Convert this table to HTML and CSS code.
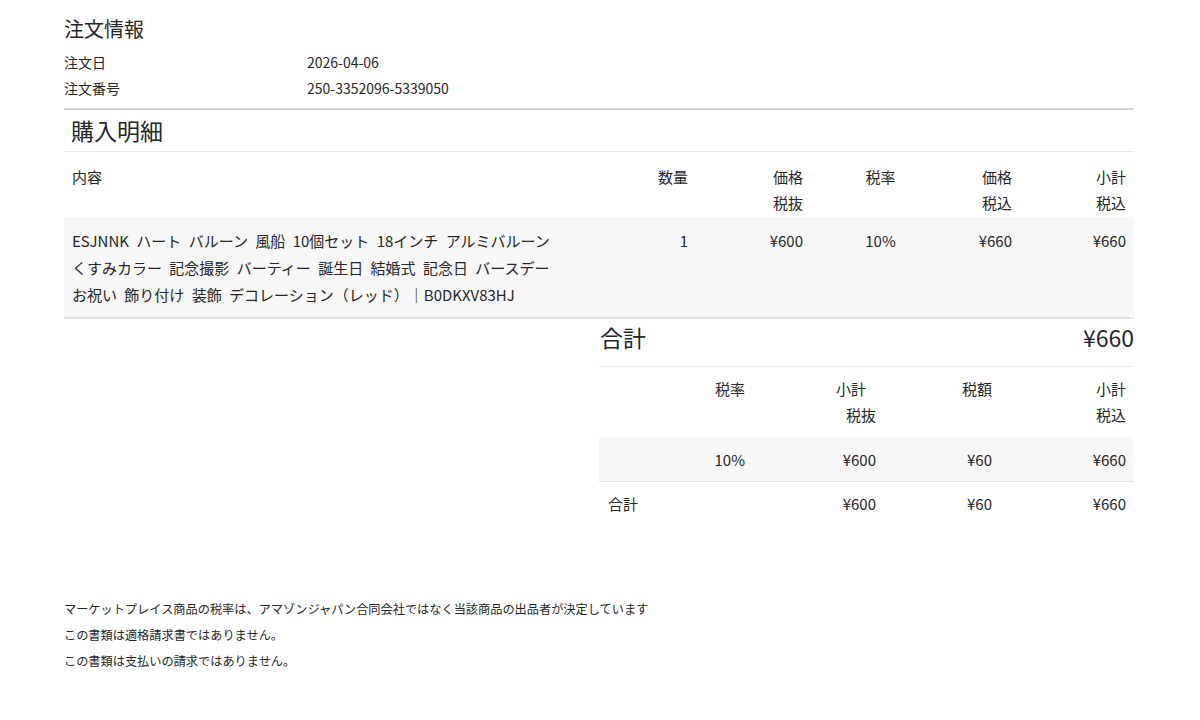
FILE: index.html
```html
<!DOCTYPE html>
<html lang="ja">
<head>
  <meta charset="UTF-8">
  <title>注文情報</title>
  <link rel="stylesheet" href="styles.css">
</head>
<body>
  <div class="page">
    <h2 class="title">注文情報</h2>
    <div class="info">
      <div class="info-row"><span class="info-label">注文日</span><span>2026-04-06</span></div>
      <div class="info-row"><span class="info-label">注文番号</span><span>250-3352096-5339050</span></div>
    </div>

    <h2 class="section">購入明細</h2>
    <table class="items">
      <colgroup>
        <col style="width:526px"><col style="width:106px"><col style="width:115px">
        <col style="width:139px"><col style="width:70px"><col style="width:114px">
      </colgroup>
      <thead>
        <tr>
          <th class="left">内容</th>
          <th>数量</th>
          <th>価格<br>税抜</th>
          <th class="center">税率</th>
          <th>価格<br>税込</th>
          <th>小計<br>税込</th>
        </tr>
      </thead>
      <tbody>
        <tr class="item">
          <td class="left desc">ESJNNK ハート バルーン 風船 10個セット 18インチ アルミバルーン<br>くすみカラー 記念撮影 バーティー 誕生日 結婚式 記念日 バースデー<br>お祝い 飾り付け 装飾 デコレーション（レッド）｜B0DKXV83HJ</td>
          <td>1</td>
          <td>¥600</td>
          <td class="center">10%</td>
          <td>¥660</td>
          <td>¥660</td>
        </tr>
      </tbody>
    </table>

    <div class="summary">
      <div class="total"><span>合計</span><span>¥660</span></div>
      <table class="tax">
        <colgroup>
          <col style="width:154px"><col style="width:131px"><col style="width:116px"><col style="width:134px">
        </colgroup>
        <thead>
          <tr>
            <th>税率</th>
            <th><span class="shift">小計</span><br>税抜</th>
            <th>税額</th>
            <th>小計<br>税込</th>
          </tr>
        </thead>
        <tbody>
          <tr class="rate-row">
            <td>10%</td>
            <td>¥600</td>
            <td>¥60</td>
            <td>¥660</td>
          </tr>
          <tr>
            <td class="left">合計</td>
            <td>¥600</td>
            <td>¥60</td>
            <td>¥660</td>
          </tr>
        </tbody>
      </table>
    </div>

    <div class="notes">
      <p>マーケットプレイス商品の税率は、アマゾンジャパン合同会社ではなく当該商品の出品者が決定しています</p>
      <p>この書類は適格請求書ではありません。</p>
      <p>この書類は支払いの請求ではありません。</p>
    </div>
  </div>
</body>
</html>
```

FILE: styles.css
```css
body { margin: 0; background: #fff; color: #262626; font-family: "Noto Sans CJK JP", "Noto Sans", sans-serif; font-size: 15px; }
.page { width: 1070px; padding: 14px 0 0 64px; }

.title { margin: 0; font-size: 20px; font-weight: normal; line-height: 30px; }
.info { margin-top: 5px; padding-bottom: 7px; border-bottom: 2px solid #d4d4d4; }
.info-row { display: flex; line-height: 26px; font-size: 14px; }
.info-label { width: 243px; }

.section { margin: 0; padding: 5px 7px 6px; font-size: 23px; font-weight: normal; line-height: 30px; border-bottom: 1px solid #e8e8e8; }

table { border-collapse: collapse; table-layout: fixed; }
th, td { font-weight: normal; text-align: right; vertical-align: top; padding: 0 8px; }
.left { text-align: left; }
.center { text-align: center; }

.items { width: 1070px; }
.items th { padding-top: 12px; padding-bottom: 1px; line-height: 26px; }
.items .item td { background: #f7f7f7; padding-top: 10px; padding-bottom: 9px; line-height: 27px; border-bottom: 2px solid #e4e4e4; }
.items .desc { word-spacing: 4px; }

.summary { width: 535px; margin-left: 535px; }
.total { display: flex; justify-content: space-between; padding: 3px 0 14px 1px; font-size: 23px; line-height: 30px; border-bottom: 1px solid #ececec; }
.tax { width: 535px; }
.tax th, .tax td { padding-top: 9px; padding-bottom: 9px; line-height: 26px; }
.tax .rate-row td { padding-top: 10px; padding-bottom: 8px; }
.tax td.left { padding-left: 9px; }
.tax .rate-row td { background: #f7f7f7; border-bottom: 1px solid #e6e6e6; }
.shift { margin-right: 10px; }

.notes { margin-top: 70px; font-size: 12.2px; }
.notes p { margin: 0; line-height: 26px; }
```
